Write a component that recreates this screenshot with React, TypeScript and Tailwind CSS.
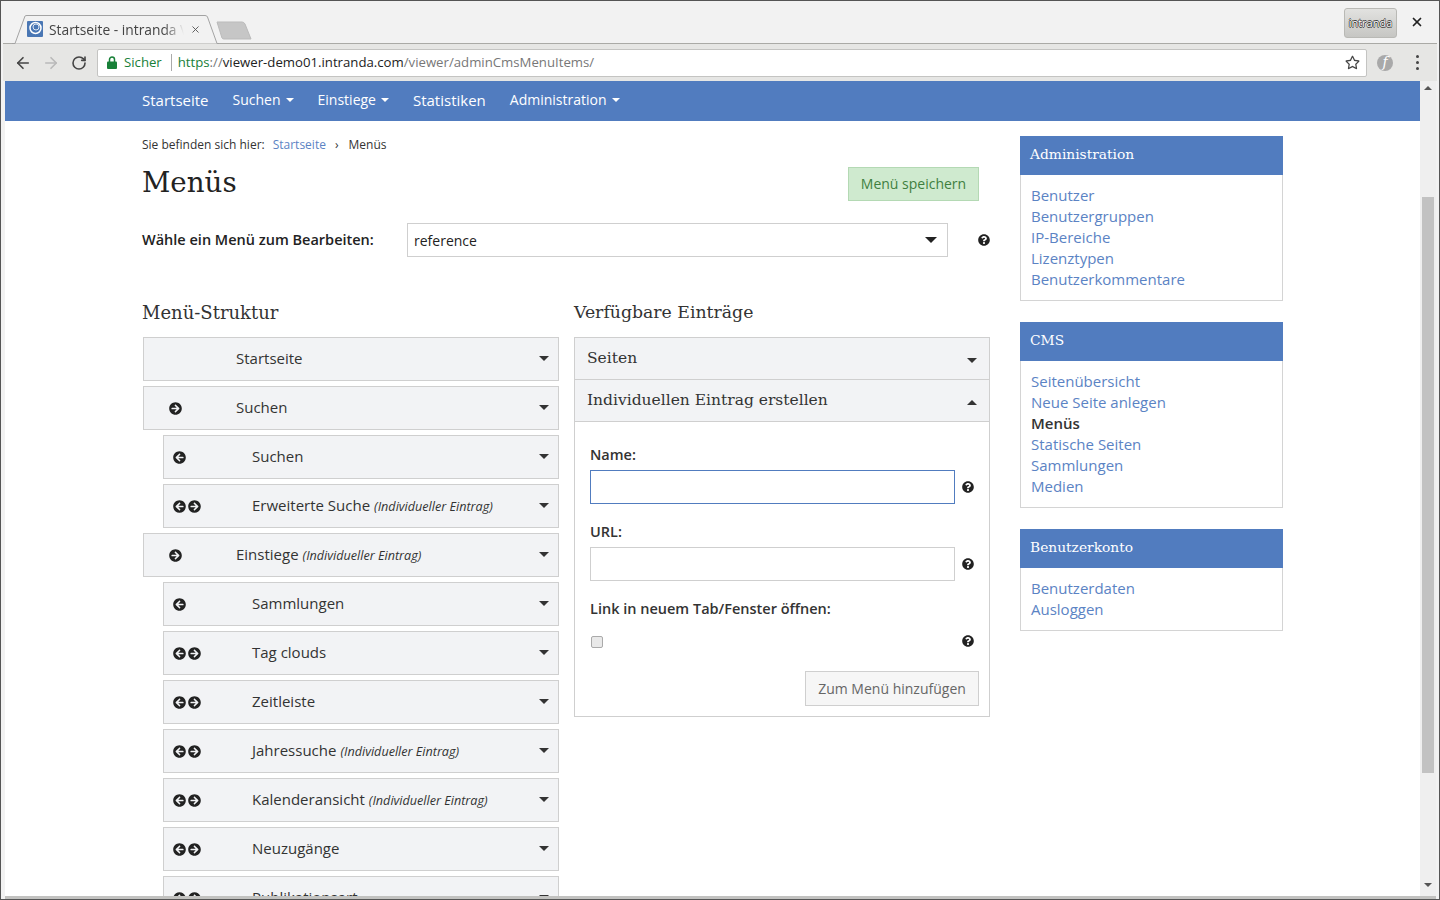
import { FaArrowCircleLeft, FaArrowCircleRight, FaQuestionCircle, FaRegStar } from 'react-icons/fa';
import { ArrowLeft, ArrowRight, RotateCw, X } from 'lucide-react';

const serif = "font-['DejaVu_Serif',serif]";

type Row = { label: string; custom?: boolean; nested?: boolean; left?: boolean; right?: boolean };

const rows: Row[] = [
  { label: 'Startseite' },
  { label: 'Suchen', right: true },
  { label: 'Suchen', nested: true, left: true },
  { label: 'Erweiterte Suche', custom: true, nested: true, left: true, right: true },
  { label: 'Einstiege', custom: true, right: true },
  { label: 'Sammlungen', nested: true, left: true },
  { label: 'Tag clouds', nested: true, left: true, right: true },
  { label: 'Zeitleiste', nested: true, left: true, right: true },
  { label: 'Jahressuche', custom: true, nested: true, left: true, right: true },
  { label: 'Kalenderansicht', custom: true, nested: true, left: true, right: true },
  { label: 'Neuzugänge', nested: true, left: true, right: true },
  { label: 'Publikationsart', nested: true, left: true, right: true },
];

const sidebar = [
  { title: 'Administration', links: ['Benutzer', 'Benutzergruppen', 'IP-Bereiche', 'Lizenztypen', 'Benutzerkommentare'] },
  { title: 'CMS', links: ['Seitenübersicht', 'Neue Seite anlegen', 'Menüs', 'Statische Seiten', 'Sammlungen', 'Medien'] },
  { title: 'Benutzerkonto', links: ['Benutzerdaten', 'Ausloggen'] },
];

function Caret({ up, className }: { up?: boolean; className?: string }) {
  return (
    <svg width="10" height="5" viewBox="0 0 10 5" className={className}>
      <path d={up ? 'M0 5 L5 0 L10 5 Z' : 'M0 0 L10 0 L5 5 Z'} fill="currentColor" />
    </svg>
  );
}

function NavItem({ label, menu }: { label: string; menu?: boolean }) {
  return (
    <span className={`flex items-center gap-[5px] ${menu ? 'mb-[2px] text-[14px]' : 'text-[15px]'}`}>
      {label}
      {menu && <Caret className="w-[8px] h-[4px]" />}
    </span>
  );
}

function Chrome() {
  return (
    <div className="shrink-0">
      <div className="h-[42px] flex items-end pl-[11px] pr-[12px] relative">
        <div className="relative w-[207px] h-[28px] flex items-center pl-[15px] pr-[18px]">
          <svg className="absolute inset-0" width="207" height="29" viewBox="0 0 207 29">
            <path d="M0 28.5 H3 L13 1 Q13.5 .5 15 .5 H193 Q195 .5 195.5 2 L205 28.5 H207" fill="#f2f2f2" stroke="#a3a3a3" />
          </svg>
          <svg className="relative shrink-0" width="16" height="16" viewBox="0 0 16 16">
            <rect width="16" height="16" rx="1" fill="#4a77b4" />
            <circle cx="8.5" cy="7" r="5.5" fill="none" stroke="#fff" strokeWidth="1.5" />
            <circle cx="9" cy="6" r="3" fill="#4a77b4" stroke="#dfe8f3" />
          </svg>
          <span className="relative ml-[6px] mt-[2px] w-[135px] shrink-0 overflow-hidden whitespace-nowrap text-[13.8px] text-[#444] [mask-image:linear-gradient(90deg,#000_85%,transparent)]">Startseite - intranda Viewer</span>
          <X className="relative ml-[6px] text-[#555]" size={15} strokeWidth={2} />
        </div>
        <svg className="ml-[-3px] mb-[3px]" width="36" height="19" viewBox="0 0 36 19">
          <path d="M1 1 H26 Q28 1 29 3 L35 18 H8 Q6.5 18 6 17 Z" fill="#c6c6c6" stroke="#bbb" />
        </svg>
        <div className="absolute left-[1343px] top-[7px] w-[53px] h-[30px] rounded-[3px] border border-[#b9b9b5] bg-[linear-gradient(#e2e2e0,#c6c6c3)] flex items-center justify-center text-[11px] text-white [text-shadow:0.6px_0_0_#333,-0.6px_0_0_#333,0_0.6px_0_#333,0_-0.6px_0_#333]">
          intranda
        </div>
        <X className="absolute left-[1409px] top-[14px] text-[#222]" size={14} strokeWidth={3} />
      </div>
      <div className="h-[38px] mx-[2px] border-t border-[#aaaaa6] bg-[#e6e6e4] flex items-center pl-[11px] pr-[12px]">
        <ArrowLeft size={18} strokeWidth={2.2} className="text-[#444]" />
        <ArrowRight size={18} strokeWidth={2.2} className="ml-[10px] text-[#b9b9b9]" />
        <RotateCw size={16} strokeWidth={2.4} className="ml-[11px] text-[#444]" />
        <div className="ml-[10px] w-[1270px] h-[28px] bg-white border border-[#c4c4c2] rounded-[2px] flex items-center pl-[9px] pr-[6px] text-[13.2px] whitespace-nowrap">
          <svg width="10" height="13" viewBox="0 0 10 13" className="shrink-0">
            <path d="M2.5 6 V3.5 a2.5 2.5 0 0 1 5 0 V6" fill="none" stroke="#188038" strokeWidth="1.5" />
            <rect y="5.5" width="10" height="7.5" rx="1" fill="#188038" />
          </svg>
          <span className="ml-[7px] text-[#188038]">Sicher</span>
          <span className="ml-[9px] mr-[6px] w-px h-[17px] bg-[#aaa]" />
          <span className="text-[#188038]">https</span>
          <span className="text-[#777]">://</span>
          <span className="text-[#222]">viewer-demo01.intranda.com</span>
          <span className="text-[#777]">/viewer/adminCmsMenuItems/</span>
          <FaRegStar size={15} className="ml-auto text-[#444]" />
        </div>
        <div className="ml-[10px] w-[16px] h-[16px] rounded-full bg-[#a9a9a9] text-white flex items-center justify-center italic text-[14px] font-['DejaVu_Serif',serif]">f</div>
        <div className="ml-[23px] flex flex-col gap-[3px]">
          <span className="w-[3px] h-[3px] rounded-full bg-[#444]" />
          <span className="w-[3px] h-[3px] rounded-full bg-[#444]" />
          <span className="w-[3px] h-[3px] rounded-full bg-[#444]" />
        </div>
      </div>
    </div>
  );
}

function MenuRow({ row }: { row: Row }) {
  return (
    <div className={`${row.nested ? 'ml-[20px] w-[396px]' : 'w-[416px]'} h-[44px] shrink-0 bg-[#f2f3f5] border border-[#cfcfcf] flex items-center text-[15px] text-[#333]`}>
      <div className={`${row.nested ? 'w-[88px] pl-[9px]' : 'w-[92px] pl-[25px]'} mt-[1px] flex gap-[2px] text-[#222] text-[13px] shrink-0`}>
        {row.left && <FaArrowCircleLeft />}
        {row.right && <FaArrowCircleRight />}
      </div>
      <span className="whitespace-nowrap mb-[1px]">
        {row.label}
        {row.custom && <i className="ml-[4px] text-[12.6px]">(Individueller Eintrag)</i>}
      </span>
      <Caret className="ml-auto mr-[9px] mb-[1px] text-[#333]" />
    </div>
  );
}

function Help() {
  return <FaQuestionCircle className="text-[#222] text-[12px] shrink-0" />;
}

function AvailablePanel() {
  return (
    <div className="w-[416px] border border-[#cfcfcf]">
      <div className="h-[42px] bg-[#f2f3f5] border-b border-[#cfcfcf] flex items-center justify-between pl-[12px] pr-[12px] text-[#333]">
        <span className={`${serif} text-[15.5px]`}>Seiten</span>
        <Caret className="mt-[3px]" />
      </div>
      <div className="h-[42px] bg-[#f2f3f5] border-b border-[#cfcfcf] flex items-center justify-between pl-[12px] pr-[12px] text-[#333]">
        <span className={`${serif} text-[15.5px]`}>Individuellen Eintrag erstellen</span>
        <Caret up className="mt-[3px]" />
      </div>
      <div className="h-[294px] pl-[15px] pr-[10px] pt-[23px] text-[14.5px] text-[#333]">
        <label className="block h-[20px] font-semibold leading-[20px]">Name:</label>
        <div className="mt-[5px] flex items-center">
          <input className="w-[365px] h-[34px] border border-[#517cbf] outline-none bg-white" />
          <span className="ml-[7px]"><Help /></span>
        </div>
        <label className="block mt-[18px] h-[20px] font-semibold leading-[20px]">URL:</label>
        <div className="mt-[5px] flex items-center">
          <input className="w-[365px] h-[34px] border border-[#cfcfcf] outline-none bg-white" />
          <span className="ml-[7px]"><Help /></span>
        </div>
        <label className="block mt-[18px] h-[20px] font-semibold leading-[20px]">Link in neuem Tab/Fenster öffnen:</label>
        <div className="mt-[15px] flex items-center h-[14px]">
          <input type="checkbox" className="appearance-none w-[12px] h-[12px] ml-[1px] mt-[2px] rounded-[2px] border border-[#aaa] bg-[#e9e9e9]" />
          <span className="ml-[359px]"><Help /></span>
        </div>
        <div className="mt-[23px] flex justify-end">
          <button className="w-[174px] h-[35px] border border-[#cfcfcf] bg-[#f6f6f6] text-[#666] text-[14px]">Zum Menü hinzufügen</button>
        </div>
      </div>
    </div>
  );
}

function Sidebar() {
  return (
    <aside className="w-[263px] ml-[30px] pt-[15px] flex flex-col gap-[21px] shrink-0">
      {sidebar.map((box) => (
        <div key={box.title} className="border border-[#d4d4d4] border-t-0">
          <div className={`${serif} h-[39px] -mx-px bg-[#517cbf] text-white text-[13.8px] flex items-center pl-[10px] pb-[2px]`}>{box.title}</div>
          <ul className="pl-[10px] py-[10px] text-[15px] leading-[21px] text-[#5b83c4]">
            {box.links.map((link) => (
              <li key={link} className={link === 'Menüs' ? 'text-[#333] font-semibold' : ''}>{link}</li>
            ))}
          </ul>
        </div>
      ))}
    </aside>
  );
}

function Scrollbar() {
  return (
    <div className="w-[16px] shrink-0 bg-[#efefef] flex flex-col items-center text-[#555]">
      <Caret up className="mt-[5px] w-[8px] h-[4px]" />
      <div className="mt-[107px] w-[12px] h-[576px] bg-[#c2c2c2]" />
      <Caret className="mt-[110px] w-[8px] h-[4px]" />
    </div>
  );
}

export default function App() {
  return (
    <div className="w-[1440px] h-[900px] overflow-hidden flex flex-col bg-[#f2f2f2] border border-[#555] font-['Open_Sans',sans-serif]">
      <Chrome />
      <div className="flex-1 min-h-0 flex ml-[4px] mr-[3px] border-b-[3px] border-[#c2c2c0]">
        <div className="w-[1415px] shrink-0 bg-white overflow-hidden flex flex-col">
          <nav className="h-[40px] shrink-0 bg-[#517cbf] text-white flex items-center gap-[24px] pl-[137px] pb-[1px]">
            <NavItem label="Startseite" />
            <NavItem label="Suchen" menu />
            <NavItem label="Einstiege" menu />
            <NavItem label="Statistiken" />
            <NavItem label="Administration" menu />
          </nav>
          <div className="flex-1 min-h-0 flex pl-[137px]">
            <main className="w-[848px] shrink-0 pt-[16px]">
              <div className="h-[16px] flex items-center text-[12px] text-[#333] whitespace-nowrap">
                Sie befinden sich hier:
                <span className="ml-[8px] text-[#5b83c4]">Startseite</span>
                <span className="ml-[9px] mr-[10px]">›</span>
                Menüs
              </div>
              <div className="mt-[14px] h-[34px] flex items-center justify-between pr-[11px]">
                <h1 className={`${serif} text-[27.7px] text-[#222] mb-[2px]`}>Menüs</h1>
                <button className="w-[131px] h-[34px] pb-[2px] bg-[#cfeacf] border border-[#b4d9b4] text-[#3f7f3f] text-[14px]">Menü speichern</button>
              </div>
              <div className="mt-[22px] h-[34px] flex items-center text-[14px] text-[#222]">
                <span className="w-[265px] font-semibold text-[14.5px]">Wähle ein Menü zum Bearbeiten:</span>
                <div className="w-[541px] h-[34px] border border-[#cfcfcf] flex items-center justify-between pl-[6px] pr-[10px]">
                  reference
                  <Caret className="w-[12px] h-[6px]" />
                </div>
                <span className="ml-[30px]"><Help /></span>
              </div>
              <div className="mt-[44px] flex gap-[15px]">
                <section className="w-[417px] shrink-0">
                  <h2 className={`${serif} h-[24px] leading-[24px] text-[18px] text-[#333]`}>Menü-Struktur</h2>
                  <div className="mt-[12px] pl-px flex flex-col gap-[5px]">
                    {rows.map((row, i) => <MenuRow key={i} row={row} />)}
                  </div>
                </section>
                <section>
                  <h2 className={`${serif} h-[24px] leading-[22px] text-[17.3px] text-[#333]`}>Verfügbare Einträge</h2>
                  <div className="mt-[12px]"><AvailablePanel /></div>
                </section>
              </div>
            </main>
            <Sidebar />
          </div>
        </div>
        <Scrollbar />
      </div>
    </div>
  );
}
